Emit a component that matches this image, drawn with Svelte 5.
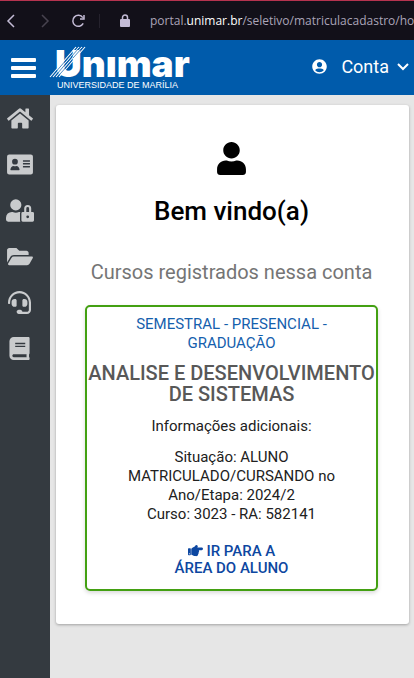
<script>
  const menu = [
    { label: 'Início', w: 26, h: 23, box: '0 0 576 512', d: 'M280.37 148.26L96 300.11V464a16 16 0 0 0 16 16l112.06-.29a16 16 0 0 0 15.92-16V368a16 16 0 0 1 16-16h64a16 16 0 0 1 16 16v95.64a16 16 0 0 0 16 16.05L464 480a16 16 0 0 0 16-16V300L295.67 148.26a12.19 12.19 0 0 0-15.3 0zM571.6 251.47L488 182.56V44.05a12 12 0 0 0-12-12h-56a12 12 0 0 0-12 12v72.61L318.47 43a48 48 0 0 0-61 0L4.34 251.47a12 12 0 0 0-1.6 16.9l25.5 31A12 12 0 0 0 45.15 301l235.22-193.74a12.19 12.19 0 0 1 15.3 0L530.9 301a12 12 0 0 0 16.9-1.6l25.5-31a12 12 0 0 0-1.7-16.93z' },
    { label: 'Dados pessoais', w: 26, h: 23, box: '0 0 576 512', d: 'M48 32H528a48 48 0 0 1 48 48V432a48 48 0 0 1-48 48H48a48 48 0 0 1-48-48V80a48 48 0 0 1 48-48zM176 128a64 64 0 1 0 0 128 64 64 0 1 0 0-128zM93 384H259c11 0 21-9 19-19-8-46-34-77-70-77-20 10-44 10-64 0-36 0-62 31-70 77-2 10 8 19 19 19zM360 160c-10 0-10 32 0 32H504c10 0 10-32 0-32zM360 224c-10 0-10 32 0 32H504c10 0 10-32 0-32zM360 288c-10 0-10 32 0 32H504c10 0 10-32 0-32z' },
    { label: 'Acesso', w: 28, h: 23, box: '0 0 640 512', d: 'M224 256A128 128 0 1 0 96 128a128 128 0 0 0 128 128zm96 64a63.08 63.08 0 0 1 8.1-30.5c-4.8-.5-9.5-1.5-14.5-1.5h-16.7a174.08 174.08 0 0 1-145.8 0h-16.7A134.43 134.43 0 0 0 0 422.4V464a48 48 0 0 0 48 48h280.9a63.54 63.54 0 0 1-8.9-32zm288-32h-32v-80a80 80 0 0 0-160 0v80h-32a32 32 0 0 0-32 32v160a32 32 0 0 0 32 32h224a32 32 0 0 0 32-32V320a32 32 0 0 0-32-32zM496 432a32 32 0 1 1 32-32 32 32 0 0 1-32 32zm32-144h-64v-80a32 32 0 0 1 64 0z' },
    { label: 'Documentos', w: 26, h: 23, box: '0 0 576 512', d: 'M572.694 292.093L500.27 416.248A63.997 63.997 0 0 1 444.989 448H45.025c-18.523 0-30.064-20.093-20.731-36.093l72.424-124.155A64 64 0 0 1 152 256h399.964c18.523 0 30.064 20.093 20.73 36.093zM152 224h328v-48c0-26.51-21.49-48-48-48H272l-64-64H48C21.49 64 0 85.49 0 112v278.046l69.077-118.418C86.214 242.25 117.989 224 152 224z' },
    { label: 'Atendimento', w: 23, h: 23, box: '0 0 512 512', d: 'M192 208c0-17.67-14.33-32-32-32h-16c-35.35 0-64 28.65-64 64v48c0 35.35 28.65 64 64 64h16c17.67 0 32-14.33 32-32V208zm176 144c35.35 0 64-28.65 64-64v-48c0-35.35-28.65-64-64-64h-16c-17.67 0-32 14.33-32 32v112c0 17.67 14.33 32 32 32h16zM256 0C113.18 0 4.58 118.83 0 256v16c0 8.84 7.16 16 16 16h16c8.84 0 16-7.16 16-16v-16c0-114.69 93.31-208 208-208s208 93.31 208 208h-.12c.08 2.43.12 165.72.12 165.72 0 23.35-18.93 42.28-42.28 42.28H320c0-26.51-21.49-48-48-48h-32c-26.51 0-48 21.49-48 48s21.49 48 48 48h181.72c49.86 0 90.28-40.42 90.28-90.28V256C507.42 118.83 398.82 0 256 0z' },
    { label: 'Manual', w: 21, h: 23, box: '0 0 448 512', d: 'M448 360V24c0-13.3-10.7-24-24-24H96C43 0 0 43 0 96v320c0 53 43 96 96 96h328c13.3 0 24-10.7 24-24v-16c0-7.5-3.5-14.3-8.9-18.7-4.2-15.4-4.2-59.3 0-74.7 5.4-4.3 8.9-11.1 8.9-18.6zM128 134c0-3.3 2.7-6 6-6h212c3.3 0 6 2.7 6 6v20c0 3.3-2.7 6-6 6H134c-3.3 0-6-2.7-6-6v-20zm0 64c0-3.3 2.7-6 6-6h212c3.3 0 6 2.7 6 6v20c0 3.3-2.7 6-6 6H134c-3.3 0-6-2.7-6-6v-20zm253.4 250H96c-17.7 0-32-14.3-32-32 0-17.6 14.4-32 32-32h285.4c-1.9 17.1-1.9 46.9 0 64z' }
  ];
</script>

<div class="page">
  <div class="browser">
    <button class="nav" aria-label="Voltar"><svg width="16" height="16" viewBox="0 0 16 16"><path d="M11 2 5 8l6 6" /></svg></button>
    <button class="nav off" aria-label="Avançar"><svg width="16" height="16" viewBox="0 0 16 16"><path d="m5 2 6 6-6 6" /></svg></button>
    <button class="nav" aria-label="Recarregar"><svg width="16" height="16" viewBox="0 0 16 16"><path d="M12.2 10.4A5.5 5.5 0 1 1 11.8 4.6M13 2V6H9" /></svg></button>
    <span class="divider"></span>
    <svg class="padlock" width="10" height="14" viewBox="0 0 10 14"><rect y="5" width="10" height="8" rx="1" /><path d="M2.5 6V3.5a2.5 2.5 0 0 1 5 0V6" /></svg>
    <span class="url">portal.<b>unimar.br</b>/seletivo/matriculacadastro/ho</span>
  </div>

  <header>
    <button class="burger" aria-label="Menu"><i></i><i></i><i></i></button>
    <a class="logo" href="#inicio" aria-label="Unimar">
      <svg width="144" height="44" viewBox="0 0 144 44">
        <path class="stripe" d="M1 31 27 1M4 31 30 1M7 31 33 1M10 31 36 1" />
        <text class="word" x="6" y="31">Unımar</text>
        <path class="cut" d="M5 28 18 13M8 28 20 14M11 28 20 18M22 11 30 2M24 12 33 2" />
        <text class="sub" x="8" y="42">UNIVERSIDADE DE MARÍLIA</text>
      </svg>
    </a>
    <button class="account">
      <svg width="15" height="15" viewBox="0 0 496 512"><path d="M248 8C111 8 0 119 0 256s111 248 248 248 248-111 248-248S385 8 248 8zm0 96c48.6 0 88 39.4 88 88s-39.4 88-88 88-88-39.4-88-88 39.4-88 88-88zm0 344c-58.7 0-111.3-26.6-146.5-68.2 18.8-35.4 55.6-59.8 98.5-59.8 2.4 0 4.8.4 7.1 1.1 13 4.2 26.6 6.9 40.9 6.9 14.3 0 28-2.7 40.9-6.9 2.3-.7 4.7-1.1 7.1-1.1 42.9 0 79.7 24.4 98.5 59.8C359.3 421.4 306.7 448 248 448z" /></svg>
      <span>Conta</span>
      <svg class="chevron" width="12" height="8" viewBox="0 0 12 8"><path d="m1 1 5 5 5-5" /></svg>
    </button>
  </header>

  <div class="body">
    <nav>
      {#each menu as item}
        <a href="#menu" aria-label={item.label}>
          <svg width={item.w} height={item.h} viewBox={item.box}><path fill-rule="evenodd" d={item.d} /></svg>
        </a>
      {/each}
    </nav>

    <main>
      <section class="card">
        <svg class="person" width="29" height="33" viewBox="0 0 448 512"><path d="M224 256c70.7 0 128-57.3 128-128S294.7 0 224 0 96 57.3 96 128s57.3 128 128 128zm89.6 32h-16.7c-22.2 10.2-46.9 16-72.9 16s-50.6-5.8-72.9-16h-16.7C60.2 288 0 348.2 0 422.4V464c0 26.5 21.5 48 48 48h352c26.5 0 48-21.5 48-48v-41.6c0-74.2-60.2-134.4-134.4-134.4z" /></svg>
        <h1>Bem vindo(a)</h1>
        <h2>Cursos registrados nessa conta</h2>
        <article class="course">
          <p class="kind">SEMESTRAL - PRESENCIAL - GRADUAÇÃO</p>
          <h3>ANALISE E DESENVOLVIMENTO DE SISTEMAS</h3>
          <p>Informações adicionais:</p>
          <p class="info">Situação: ALUNO<br />MATRICULADO/CURSANDO no<br />Ano/Etapa: 2024/2<br />Curso: 3023 - RA: 582141</p>
          <a class="go" href="#aluno">
            <svg width="15" height="15" viewBox="0 0 512 512"><path d="M512 199.652c0 23.625-20.65 43.826-44.8 43.826h-99.851c16.34 17.048 18.346 49.766-6.299 70.944 14.288 22.829 2.147 53.017-16.45 62.315C353.574 425.878 322.654 448 272 448c-2.746 0-13.276-.203-16-.195-61.971.168-76.894-31.065-123.731-38.315C120.596 407.683 112 397.599 112 385.786V214.261l.002-.001c.011-18.366 10.607-35.889 28.464-43.845 28.886-12.994 95.413-49.038 107.534-77.323 7.797-18.194 21.384-29.084 40-29.092 34.222-.014 57.752 35.098 44.119 66.908-3.583 8.359-8.312 16.67-14.153 24.918H467.2c23.45 0 44.8 20.543 44.8 43.826zM96 200v192c0 13.255-10.745 24-24 24H24c-13.255 0-24-10.745-24-24V200c0-13.255 10.745-24 24-24h48c13.255 0 24 10.745 24 24zM68 368c0-11.046-8.954-20-20-20s-20 8.954-20 20 8.954 20 20 20 20-8.954 20-20z" /></svg>
            IR PARA A<br />ÁREA DO ALUNO
          </a>
        </article>
      </section>
    </main>
  </div>
</div>

<style>
  .page { display: flex; flex-direction: column; min-height: 100vh; font-family: Roboto, sans-serif; overflow: hidden; }
  .page * { box-sizing: border-box; }
  button { border: 0; padding: 0; background: none; color: inherit; font: inherit; }
  svg { display: block; flex: none; fill: currentColor; }
  h1, h2, h3, p { margin: 0; }

  .browser { display: flex; align-items: center; height: 40px; padding-left: 3px; border-top: 1px solid #b5334f; background: #121019; color: #c4bcd6; overflow: hidden; }
  .nav { display: flex; margin-right: 18px; }
  .nav svg { fill: none; stroke: currentColor; stroke-width: 1.5; }
  .nav.off { color: #47434f; }
  .divider { width: 1px; height: 14px; margin-left: -6px; margin-right: 20px; background: #25222d; flex: none; }
  .padlock path { fill: none; stroke: currentColor; stroke-width: 1.5; }
  .url { margin-left: 20px; font: 12px 'Open Sans', sans-serif; white-space: nowrap; color: #aaa4b8; }
  .url b { font-weight: 400; color: #fff; }

  header { display: flex; align-items: center; height: 55px; padding: 0 5px 0 11px; background: #005bab; color: #fff; }
  .burger { display: flex; flex-direction: column; gap: 4px; width: 25px; }
  .burger i { height: 4px; border-radius: 1px; background: #fff; }
  .logo { margin-left: 13px; color: #fff; }
  .logo svg { overflow: visible; }
  .stripe { fill: none; stroke: #fff; stroke-width: 1.1; }
  .cut { fill: none; stroke: #005bab; stroke-width: 0.7; }
  .word { font: 900 37px Inter, sans-serif; }
  .sub { font: 9px 'Liberation Sans', sans-serif; }
  .account { display: flex; align-items: center; margin-left: auto; font-size: 18px; line-height: 20px; padding-bottom: 2px; }
  .account span { margin: 0 8px 0 14px; }
  .chevron { fill: none; stroke: currentColor; stroke-width: 2; }

  .body { display: flex; flex: 1; }
  nav { width: 50px; flex: none; padding-right: 11px; background: #343a40; color: #c9cbcd; }
  nav a { display: flex; align-items: center; justify-content: center; height: 46px; color: inherit; }
  main { flex: 1; padding: 10px 5px 54px 6px; background: #e6e6e6; }
  .card { display: flex; flex-direction: column; align-items: center; padding: 37px 31px 33px 29px; border-radius: 3px; background: #fff; box-shadow: 0 1px 3px rgba(0, 0, 0, 0.3); text-align: center; }
  h1 { margin-top: 20px; font-size: 26px; font-weight: 500; line-height: 32px; color: #000; }
  h2 { margin-top: 33px; font-size: 20px; font-weight: 400; line-height: 24px; color: #757575; }
  .course { align-self: stretch; margin-top: 21px; padding: 8px 0 12px; border: 2px solid #43a012; border-radius: 5px; box-shadow: 0 2px 4px rgba(0, 0, 0, 0.15); font-size: 15px; line-height: 19px; color: #212121; }
  .kind { padding: 0 40px; color: #1560ad; }
  h3 { margin: 10px 0 12px; font-size: 20px; font-weight: 500; line-height: 21px; color: #585858; }
  .info { margin-top: 12px; }
  .go { display: block; margin-top: 19px; font-size: 15px; font-weight: 500; line-height: 17px; color: #0d47a1; text-decoration: none; }
  .go svg { display: inline-block; vertical-align: -2px; }
</style>
